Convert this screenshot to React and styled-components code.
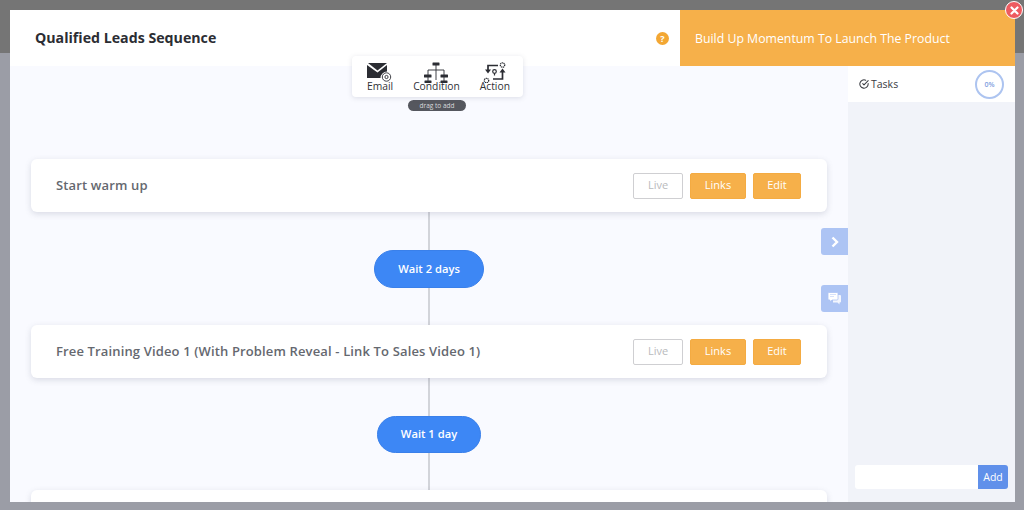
import React from 'react'
import styled, { createGlobalStyle } from 'styled-components'
import { FiCheckCircle } from 'react-icons/fi'

const Global = createGlobalStyle`
  html, body { margin: 0; padding: 0; }
  body { font-family: "Open Sans", "Liberation Sans", sans-serif; }
  * { box-sizing: border-box; }
`

const Page = styled.div`
  width: 1024px;
  height: 510px;
  overflow: hidden;
  padding: 10px 9px 8px 10px;
  background: linear-gradient(#757575 0, #757575 53px, #9b9da6 53px, #9b9da6 100%);
`

const Modal = styled.div`
  position: relative;
  height: 100%;
  display: flex;
  flex-direction: column;
  background: #fff;
`

const Header = styled.header`
  height: 56px;
  flex: none;
  display: flex;
  align-items: center;
  background: #fff;
`

const Title = styled.h1`
  flex: 1;
  margin: 0;
  padding: 0 0 1px 25px;
  font-size: 14.2px;
  font-weight: 700;
  color: #2b2d33;
`

const Help = styled.span`
  width: 13px;
  height: 13px;
  margin-right: 11px;
  border-radius: 50%;
  background: #f3a733;
  color: #fff;
  font-size: 9px;
  font-weight: 700;
  line-height: 13px;
  text-align: center;
`

const Goal = styled.div`
  width: 335px;
  height: 100%;
  display: flex;
  align-items: center;
  padding-left: 15px;
  background: #f6b04a;
  color: #fff;
  font-size: 12.3px;
`

const Close = styled.button`
  position: absolute;
  top: -9px;
  right: -8px;
  width: 18px;
  height: 18px;
  padding: 0;
  display: flex;
  align-items: center;
  justify-content: center;
  border: 1.5px solid #fff;
  border-radius: 50%;
  background: #ee5b60;
`

const Body = styled.div`
  flex: 1;
  min-height: 0;
  display: flex;
`

const Canvas = styled.main`
  position: relative;
  flex: 1;
  overflow: hidden;
  padding: 93px 21px 0;
  background: #f9faff;
`

const Flow = styled.div`
  width: 796px;
  display: flex;
  flex-direction: column;
  align-items: center;
  background: linear-gradient(#d2d4da, #d2d4da) center / 2px 100% no-repeat;
`

const Card = styled.div`
  width: 100%;
  height: 53px;
  flex: none;
  display: flex;
  align-items: center;
  gap: 7px;
  padding: 0 26px 0 25px;
  border-radius: 6px;
  background: #fff;
  box-shadow: 0 2px 6px rgba(90, 95, 120, 0.2);
`

const CardTitle = styled.span`
  flex: 1;
  padding-bottom: 1px;
  font-size: 13px;
  font-weight: 600;
  letter-spacing: 0.14px;
  color: #65686f;
`

const Btn = styled.button`
  width: ${p => p.$w}px;
  height: 26px;
  padding: 0 0 2px;
  border: 1px solid ${p => (p.$ghost ? '#cfcfd2' : '#f4ab42')};
  border-radius: 2px;
  background: ${p => (p.$ghost ? '#fff' : '#f6b04a')};
  color: ${p => (p.$ghost ? '#b9babd' : '#fff')};
  font-family: inherit;
  font-size: 11px;
  font-weight: 400;
`

const Wait = styled.div`
  width: ${p => p.$w}px;
  height: ${p => p.$h}px;
  margin: 38px 0 37px;
  flex: none;
  display: flex;
  align-items: center;
  justify-content: center;
  padding-bottom: 2px;
  border: 1px solid #3a80ea;
  border-radius: 20px;
  background: #3d87f5;
  color: #fff;
  font-size: 11.2px;
  font-weight: 600;
`

const Palette = styled.div`
  position: absolute;
  top: 46px;
  left: 342px;
  width: 171px;
  height: 41px;
  display: flex;
  justify-content: space-between;
  padding: 6px 13px 0 15px;
  border-radius: 4px;
  background: #fff;
  box-shadow: 0 1px 5px rgba(90, 95, 120, 0.18);
`

const Tool = styled.div`
  display: flex;
  flex-direction: column;
  align-items: center;
  color: #2f3136;
  font-size: 10.3px;
  font-weight: 500;
  line-height: 11px;

  svg {
    margin-bottom: -2px;
  }
`

const DragHint = styled.div`
  position: absolute;
  top: 34px;
  left: 398px;
  width: 58px;
  height: 11px;
  border-radius: 6px;
  background: #55575e;
  color: #d8d9dc;
  font-size: 6.5px;
  line-height: 11px;
  text-align: center;
`

const SideTab = styled.button`
  position: absolute;
  top: ${p => p.$top}px;
  right: 0;
  width: 27px;
  height: 27px;
  padding: 0;
  display: flex;
  align-items: center;
  justify-content: center;
  border: 0;
  border-radius: 3px 0 0 3px;
  background: #adc4f4;
`

const Sidebar = styled.aside`
  width: 167px;
  flex: none;
  display: flex;
  flex-direction: column;
  background: #f1f3f9;
`

const TasksHead = styled.div`
  height: 36px;
  display: flex;
  align-items: center;
  gap: 2px;
  padding: 0 11px;
  background: #fff;
  color: #3a3c42;
  font-size: 10.5px;
  font-weight: 500;
`

const TasksLabel = styled.span`
  flex: 1;
`

const Progress = styled.div`
  width: 29px;
  height: 29px;
  border: 2px solid #adc4f0;
  border-radius: 50%;
  color: #7f9fe0;
  font-size: 7px;
  font-weight: 600;
  line-height: 25px;
  text-align: center;
`

const TaskForm = styled.div`
  margin-top: auto;
  display: flex;
  padding: 0 7px 13px;
`

const TaskInput = styled.input`
  flex: 1;
  min-width: 0;
  height: 24px;
  border: 0;
  border-radius: 3px 0 0 3px;
  background: #fff;
`

const AddBtn = styled.button`
  width: 30px;
  height: 24px;
  padding: 0;
  border: 0;
  border-radius: 0 3px 3px 0;
  background: #6090ea;
  color: #fff;
  font-family: inherit;
  font-size: 10.5px;
  font-weight: 400;
`

const EmailIcon = () => (
  <svg width="26" height="21" viewBox="0 0 26 21">
    <path d="M1 1h19l-9.500 7.500z" fill="#2b2d33" />
    <path d="M0 3v13h13.500a6.500 6.500 0 0 1 6.500-6.500V3l-9.500 7.500z" fill="#2b2d33" />
    <circle cx="19.500" cy="15" r="4.200" fill="none" stroke="#2b2d33" strokeWidth="0.9" />
    <circle cx="19.500" cy="15" r="1.600" fill="none" stroke="#2b2d33" strokeWidth="0.9" />
  </svg>
)

const ConditionIcon = () => (
  <svg width="24" height="21" viewBox="0 0 24 21">
    <rect x="8.500" y="0.500" width="7" height="3" rx="0.500" fill="#2b2d33" />
    <path d="M12 3v15M4 13V8h16v5M4 15v4M20 15v4" fill="none" stroke="#2b2d33" strokeWidth="0.9" />
    <rect x="0" y="12.500" width="7.500" height="3" rx="0.500" fill="#2b2d33" />
    <rect x="16.500" y="12.500" width="7.500" height="3" rx="0.500" fill="#2b2d33" />
    <rect x="0.500" y="18.500" width="7" height="2.500" rx="0.500" fill="#2b2d33" />
    <rect x="16.500" y="18.500" width="7" height="2.500" rx="0.500" fill="#2b2d33" />
  </svg>
)

const ActionIcon = () => (
  <svg width="24" height="21" viewBox="0 0 24 21">
    <path d="M15 3.500H5V8" fill="none" stroke="#2b2d33" strokeWidth="1.700" />
    <path d="M2 7.500h6L5 11.500z" fill="#2b2d33" />
    <path d="M10 17h9.500v-7" fill="none" stroke="#2b2d33" strokeWidth="1.700" />
    <path d="M16.500 10.500h6L19.500 6.500z" fill="#2b2d33" />
    <circle cx="19.500" cy="3" r="2.200" fill="none" stroke="#2b2d33" strokeWidth="1.300" strokeDasharray="1.200 0.500" />
    <circle cx="3.500" cy="18.500" r="2.200" fill="none" stroke="#2b2d33" strokeWidth="1.300" strokeDasharray="1.200 0.500" />
    <circle cx="11.500" cy="9.500" r="1.800" fill="none" stroke="#2b2d33" strokeWidth="1.200" />
    <path d="M11.500 11.300v2.200" stroke="#2b2d33" strokeWidth="1.200" />
  </svg>
)

const ChatIcon = () => (
  <svg width="15" height="15" viewBox="0 0 15 15">
    <path d="M6 4h7a1 1 0 0 1 1 1v5.500a1 1 0 0 1-1 1h-.5v2l-2-2H6z" fill="#fff" opacity="0.85" />
    <path d="M2 1.500h8a1 1 0 0 1 1 1v5.500a1 1 0 0 1-1 1H5l-2 2v-2H2a1 1 0 0 1-1-1V2.500a1 1 0 0 1 1-1z" fill="#fff" stroke="#adc4f4" strokeWidth="0.8" />
    <path d="M3 3.500h6M3 5.500h4" stroke="#d3dffa" strokeWidth="0.9" />
  </svg>
)

const steps = [
  { title: 'Start warm up', wait: 'Wait 2 days', w: 110, h: 38 },
  { title: 'Free Training Video 1 (With Problem Reveal - Link To Sales Video 1)', wait: 'Wait 1 day', w: 104, h: 37 },
]

const StepCard = ({ title }) => (
  <Card>
    <CardTitle>{title}</CardTitle>
    {title && <Btn $ghost $w={50}>Live</Btn>}
    {title && <Btn $w={56}>Links</Btn>}
    {title && <Btn $w={48}>Edit</Btn>}
  </Card>
)

export default function App() {
  return (
    <Page>
      <Global />
      <Modal>
        <Header>
          <Title>Qualified Leads Sequence</Title>
          <Help>?</Help>
          <Goal>Build Up Momentum To Launch The Product</Goal>
        </Header>
        <Close aria-label="Close">
          <svg width="9" height="9" viewBox="0 0 9 9">
            <path d="M1.500 1.500l6 6M7.500 1.500l-6 6" stroke="#fff" strokeWidth="2.200" strokeLinecap="round" />
          </svg>
        </Close>
        <Body>
          <Canvas>
            <DragHint>drag to add</DragHint>
            <Flow>
              {steps.map(s => (
                <React.Fragment key={s.title}>
                  <StepCard title={s.title} />
                  <Wait $w={s.w} $h={s.h}>{s.wait}</Wait>
                </React.Fragment>
              ))}
              <StepCard />
            </Flow>
            <SideTab $top={162} aria-label="Collapse">
              <svg width="10" height="12" viewBox="0 0 10 12">
                <path d="M2.500 1.500L7 6l-4.500 4.500" fill="none" stroke="#fff" strokeWidth="2.400" />
              </svg>
            </SideTab>
            <SideTab $top={219} aria-label="Comments">
              <ChatIcon />
            </SideTab>
          </Canvas>
          <Sidebar>
            <TasksHead>
              <FiCheckCircle size={10} strokeWidth={2.5} />
              <TasksLabel>Tasks</TasksLabel>
              <Progress>0%</Progress>
            </TasksHead>
            <TaskForm>
              <TaskInput />
              <AddBtn>Add</AddBtn>
            </TaskForm>
          </Sidebar>
        </Body>
        <Palette>
          <Tool><EmailIcon />Email</Tool>
          <Tool><ConditionIcon />Condition</Tool>
          <Tool><ActionIcon />Action</Tool>
        </Palette>
      </Modal>
    </Page>
  )
}
